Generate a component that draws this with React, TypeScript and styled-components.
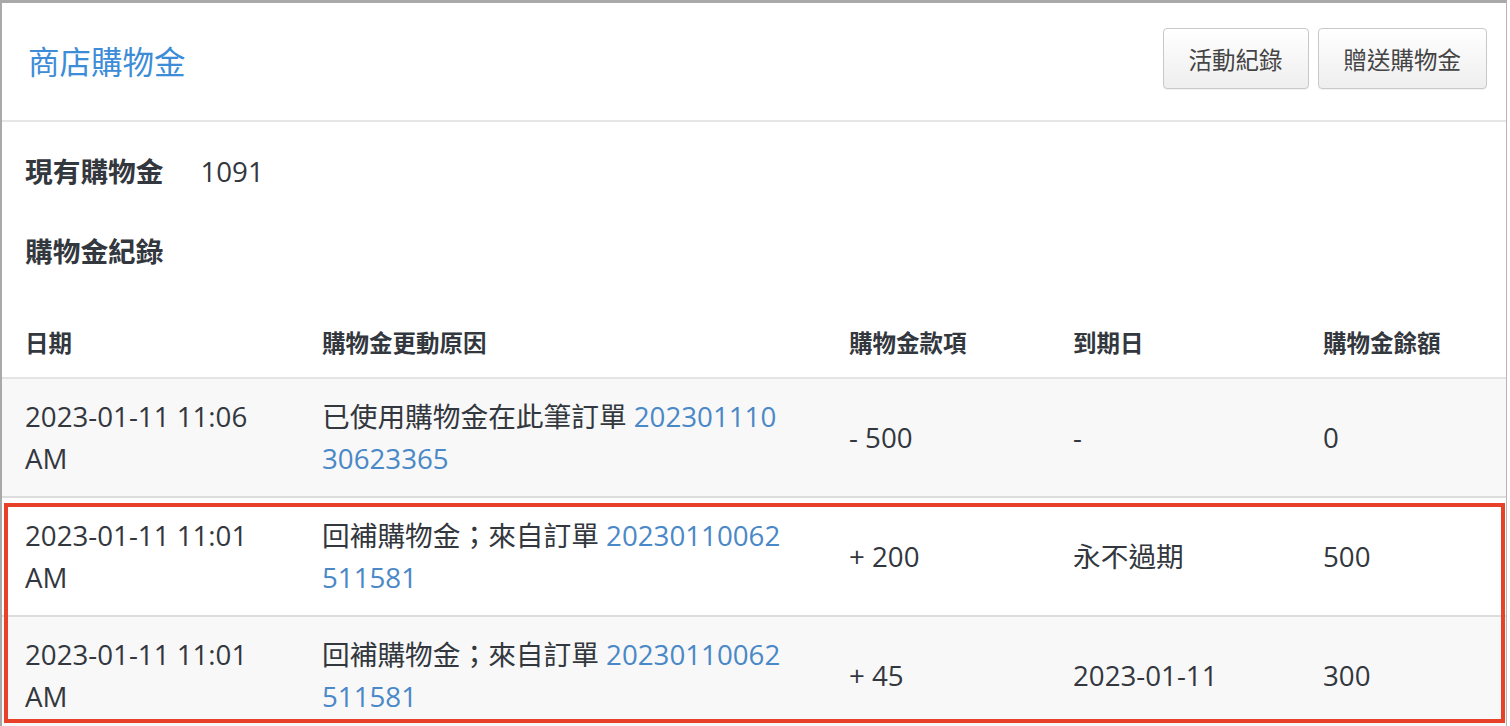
import React from "react";
import styled, { createGlobalStyle } from "styled-components";

const GlobalStyle = createGlobalStyle`
  html, body { margin: 0; padding: 0; background: #ffffff; }
  body {
    font-family: "Open Sans", "Noto Sans CJK TC", sans-serif;
    color: #33373e;
  }
  *, *::before, *::after { box-sizing: border-box; }
`;

const COLS = "297px 527px 224px 250px 1fr";

const Panel = styled.section`
  width: 1507px;
  border-top: 3px solid #a9a9a9;
  border-left: 2px solid #a9a9a9;
  border-right: 1px solid #b5b5b5;
  background: #fff;
`;

const Header = styled.header`
  height: 119px;
  padding: 0 19px 0 26px;
  display: flex;
  justify-content: space-between;
  align-items: center;
  border-bottom: 2px solid #e6e6e6;
`;

const Title = styled.h1`
  margin: 0;
  font-size: 31.5px;
  font-weight: 400;
  line-height: 40px;
  color: #3d8cd8;
  padding-top: 1px;
`;

const Actions = styled.div`
  display: flex;
  gap: 9px;
  align-self: flex-start;
  margin-top: 25px;
`;

const Button = styled.button`
  height: 61px;
  padding: 0 25px;
  font-family: inherit;
  font-size: 23.5px;
  color: #444;
  background: linear-gradient(#ffffff, #eeeeee);
  border: 1px solid #c9c9c9;
  border-radius: 4px;
  box-shadow: 0 1px 1px rgba(0, 0, 0, 0.06);
  cursor: pointer;
`;

const Body = styled.div`
  padding-top: 28px;
`;

const Summary = styled.div`
  display: flex;
  align-items: center;
  gap: 37px;
  padding-left: 23px;
  font-size: 27.7px;
  line-height: 42px;
`;

const Label = styled.span`
  font-weight: 700;
`;

const SectionTitle = styled.h2`
  margin: 38px 0 0;
  padding-left: 23px;
  font-size: 27.7px;
  line-height: 42px;
  font-weight: 700;
`;

const Table = styled.div`
  margin-top: 50px;
`;

const HeadRow = styled.div`
  display: grid;
  grid-template-columns: ${COLS};
  padding-bottom: 13px;
  border-bottom: 2px solid #e4e4e4;
`;

const HeadCell = styled.div`
  padding: 0 40px 0 23px;
  font-size: 23.5px;
  line-height: 42px;
  font-weight: 700;
`;

const Row = styled.div<{ $striped?: boolean }>`
  display: grid;
  grid-template-columns: ${COLS};
  align-items: center;
  padding: 16px 0 17px;
  border-bottom: 2px solid #dddddd;
  background: ${(p) => (p.$striped ? "#f8f8f8" : "#ffffff")};
`;

const Cell = styled.div`
  padding: 0 40px 0 23px;
  font-size: 27.7px;
  line-height: 42px;
`;

const OrderLink = styled.a`
  color: #4a88c7;
  text-decoration: none;
  word-break: break-all;
`;

const Highlight = styled.div`
  position: relative;
  &::after {
    content: "";
    position: absolute;
    left: 2px;
    right: 1px;
    top: 5px;
    height: 220px;
    border: 4px solid #e8412a;
    pointer-events: none;
  }
`;

type Record = {
  date: string;
  reason: string;
  order: string;
  amount: string;
  expiry: string;
  balance: string;
};

const records: Record[] = [
  {
    date: "2023-01-11 11:06 AM",
    reason: "已使用購物金在此筆訂單",
    order: "20230111030623365",
    amount: "- 500",
    expiry: "-",
    balance: "0",
  },
  {
    date: "2023-01-11 11:01 AM",
    reason: "回補購物金；來自訂單",
    order: "20230110062511581",
    amount: "+ 200",
    expiry: "永不過期",
    balance: "500",
  },
  {
    date: "2023-01-11 11:01 AM",
    reason: "回補購物金；來自訂單",
    order: "20230110062511581",
    amount: "+ 45",
    expiry: "2023-01-11",
    balance: "300",
  },
];

const RecordRow: React.FC<{ r: Record; striped: boolean }> = ({ r, striped }) => (
  <Row $striped={striped}>
    <Cell>{r.date}</Cell>
    <Cell>
      {r.reason} <OrderLink href="#">{r.order}</OrderLink>
    </Cell>
    <Cell>{r.amount}</Cell>
    <Cell>{r.expiry}</Cell>
    <Cell>{r.balance}</Cell>
  </Row>
);

export default function App() {
  return (
    <>
      <GlobalStyle />
      <Panel>
        <Header>
          <Title>商店購物金</Title>
          <Actions>
            <Button>活動紀錄</Button>
            <Button>贈送購物金</Button>
          </Actions>
        </Header>
        <Body>
          <Summary>
            <Label>現有購物金</Label>
            <span>1091</span>
          </Summary>
          <SectionTitle>購物金紀錄</SectionTitle>
          <Table>
            <HeadRow>
              <HeadCell>日期</HeadCell>
              <HeadCell>購物金更動原因</HeadCell>
              <HeadCell>購物金款項</HeadCell>
              <HeadCell>到期日</HeadCell>
              <HeadCell>購物金餘額</HeadCell>
            </HeadRow>
            <RecordRow r={records[0]} striped />
            <Highlight>
              <RecordRow r={records[1]} striped={false} />
              <RecordRow r={records[2]} striped />
            </Highlight>
          </Table>
        </Body>
      </Panel>
    </>
  );
}
